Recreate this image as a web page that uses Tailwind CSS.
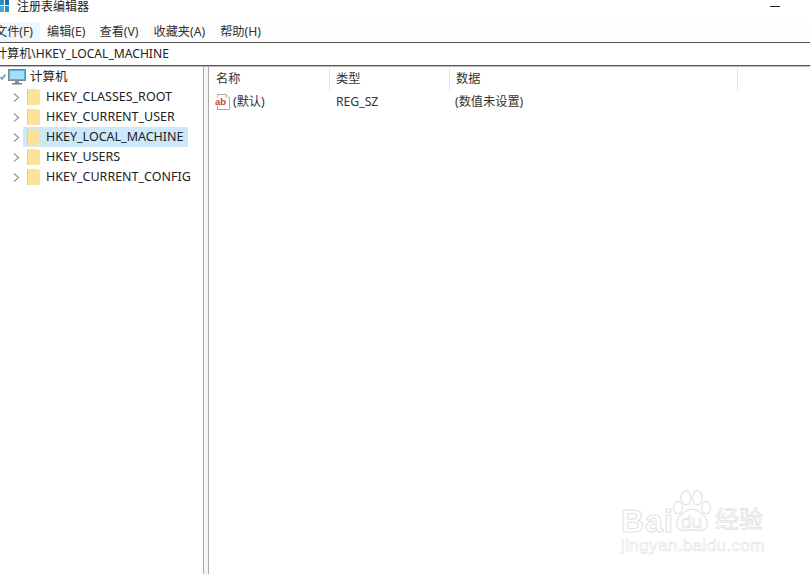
<!DOCTYPE html>
<html><head><meta charset="utf-8"><script src="https://cdn.jsdelivr.net/npm/@tailwindcss/browser@4"></script></head>
<body class="m-0 bg-white">
<div class="w-[810px] h-[574px] overflow-hidden flex flex-col bg-white text-[#1a1a1a] text-[12.2px] font-['Noto_Sans','Noto_Sans_CJK_SC',sans-serif] relative">
  <div class="h-[22px] shrink-0 flex items-start relative">
    <svg class="w-[10px] h-[13px] shrink-0" viewBox="0 0 10 13"><rect x="0" y="0" width="4" height="5" fill="#2a8ec4"/><rect x="5" y="0" width="4" height="5" fill="#1b6ea8"/><rect x="0" y="6" width="4" height="6" fill="#4aa8d8"/><rect x="5" y="6" width="4" height="6" fill="#2a8ec4"/></svg>
    <span class="ml-[7px] leading-[13px] text-[12px]">注册表编辑器</span>
    <div class="absolute left-[770px] top-[6px] w-[10px] h-px bg-[#222]"></div>
  </div>
  <div class="h-[20px] shrink-0 flex items-center leading-[20px] text-[#333] bg-[#fdfdfd]">
    <div class="w-[40px] h-[20px] bg-[#f0f6fb] overflow-hidden shrink-0 relative"><span class="absolute left-[-5px] whitespace-nowrap">文件(F)</span></div>
    <span class="ml-[7px]">编辑(E)</span>
    <span class="ml-[14px]">查看(V)</span>
    <span class="ml-[15px]">收藏夹(A)</span>
    <span class="ml-[15px]">帮助(H)</span>
  </div>
  <div class="h-[24px] shrink-0 border-y border-y-[#555] flex items-center overflow-hidden relative">
    <span class="absolute left-[-5px] whitespace-nowrap text-[#222] text-[12.1px]">计算机\HKEY_LOCAL_MACHINE</span>
  </div>
  <div class="flex-1 flex min-h-0 border-t border-t-[#bbb]">
    <div class="w-[204px] shrink-0 border-r border-r-[#aaa] text-[#222] text-[12.5px]">
      <div class="h-[20px] flex items-center relative">
        <svg class="absolute left-0 top-[7px] w-[6px] h-[6px]" viewBox="0 0 6 6"><path d="M0.5 3 L2 5 L5.5 0.5" fill="none" stroke="#3f9fc6" stroke-width="1.4"/></svg>
        <svg class="absolute left-[8px] top-[2px] w-[18px] h-[16px]" viewBox="0 0 18 16"><rect x="0.5" y="0.5" width="17" height="11" fill="#4eb2e8" stroke="#7a8a96"/><rect x="2" y="2" width="14" height="8" fill="#a9ddf7"/><rect x="7" y="12" width="4" height="2" fill="#8a98a4"/><rect x="4" y="14" width="10" height="1.5" fill="#6e7d88"/></svg>
        <span class="ml-[30px]">计算机</span>
      </div>
      <div class="h-[20px] flex items-center">
        <svg class="ml-[13px] w-[7px] h-[9px] shrink-0" viewBox="0 0 7 9"><path d="M1 0.5 L5.5 4.5 L1 8.5" fill="none" stroke="#9a9a9a" stroke-width="1.3"/></svg>
        <div class="ml-[3px] h-[20px] flex items-center gap-[6px] pl-[4px] pr-[4px]">
          <svg class="w-[13px] h-[16px] shrink-0" viewBox="0 0 13 16"><path d="M0 0 H9 L13 1 V16 H0 Z" fill="#fde39a"/><path d="M0 0 V16" stroke="#e8c667" stroke-width="1.5"/></svg>
          <span>HKEY_CLASSES_ROOT</span>
        </div>
      </div>
      <div class="h-[20px] flex items-center">
        <svg class="ml-[13px] w-[7px] h-[9px] shrink-0" viewBox="0 0 7 9"><path d="M1 0.5 L5.5 4.5 L1 8.5" fill="none" stroke="#9a9a9a" stroke-width="1.3"/></svg>
        <div class="ml-[3px] h-[20px] flex items-center gap-[6px] pl-[4px] pr-[4px]">
          <svg class="w-[13px] h-[16px] shrink-0" viewBox="0 0 13 16"><path d="M0 0 H9 L13 1 V16 H0 Z" fill="#fde39a"/><path d="M0 0 V16" stroke="#e8c667" stroke-width="1.5"/></svg>
          <span>HKEY_CURRENT_USER</span>
        </div>
      </div>
      <div class="h-[20px] flex items-center">
        <svg class="ml-[13px] w-[7px] h-[9px] shrink-0" viewBox="0 0 7 9"><path d="M1 0.5 L5.5 4.5 L1 8.5" fill="none" stroke="#9a9a9a" stroke-width="1.3"/></svg>
        <div class="ml-[3px] h-[20px] flex items-center gap-[6px] pl-[4px] pr-[4px] bg-[#cde8f8]">
          <svg class="w-[13px] h-[16px] shrink-0" viewBox="0 0 13 16"><path d="M0 0 H9 L13 1 V16 H0 Z" fill="#fde39a"/><path d="M0 0 V16" stroke="#e8c667" stroke-width="1.5"/></svg>
          <span>HKEY_LOCAL_MACHINE</span>
        </div>
      </div>
      <div class="h-[20px] flex items-center">
        <svg class="ml-[13px] w-[7px] h-[9px] shrink-0" viewBox="0 0 7 9"><path d="M1 0.5 L5.5 4.5 L1 8.5" fill="none" stroke="#9a9a9a" stroke-width="1.3"/></svg>
        <div class="ml-[3px] h-[20px] flex items-center gap-[6px] pl-[4px] pr-[4px]">
          <svg class="w-[13px] h-[16px] shrink-0" viewBox="0 0 13 16"><path d="M0 0 H9 L13 1 V16 H0 Z" fill="#fde39a"/><path d="M0 0 V16" stroke="#e8c667" stroke-width="1.5"/></svg>
          <span>HKEY_USERS</span>
        </div>
      </div>
      <div class="h-[20px] flex items-center">
        <svg class="ml-[13px] w-[7px] h-[9px] shrink-0" viewBox="0 0 7 9"><path d="M1 0.5 L5.5 4.5 L1 8.5" fill="none" stroke="#9a9a9a" stroke-width="1.3"/></svg>
        <div class="ml-[3px] h-[20px] flex items-center gap-[6px] pl-[4px] pr-[4px]">
          <svg class="w-[13px] h-[16px] shrink-0" viewBox="0 0 13 16"><path d="M0 0 H9 L13 1 V16 H0 Z" fill="#fde39a"/><path d="M0 0 V16" stroke="#e8c667" stroke-width="1.5"/></svg>
          <span>HKEY_CURRENT_CONFIG</span>
        </div>
      </div>
    </div>
    <div class="w-[4px] shrink-0 bg-[#f4f4f4]"></div>
    <div class="flex-1 min-w-0 border-l border-l-[#aaa] text-[#333]">
      <div class="h-[24px] flex items-center">
        <div class="w-[121px] h-full pl-[7px] flex items-center border-r border-r-[#e5e5e5]">名称</div>
        <div class="w-[120px] h-full pl-[6px] flex items-center border-r border-r-[#e5e5e5]">类型</div>
        <div class="w-[288px] h-full pl-[6px] flex items-center border-r border-r-[#e5e5e5]">数据</div>
      </div>
      <div class="h-[20px] mt-px flex items-center">
        <div class="w-[120px] pl-[6px] flex items-center gap-[2px]">
          <svg class="w-[16px] h-[16px] shrink-0" viewBox="0 0 16 16"><path d="M2.5 0.5 H11 L14.5 4 V15.5 H2.5 Z" fill="#fff" stroke="#a8a8a8"/><path d="M11 0.5 V4 H14.5" fill="#eee" stroke="#a8a8a8"/><rect x="0" y="3.5" width="14" height="8" fill="#fff"/><text x="0" y="10.5" font-size="9.5" font-weight="700" fill="#c8412f" font-family="Liberation Sans">ab</text></svg>
          <span>(默认)</span>
        </div>
        <div class="w-[120px] pl-[7px]">REG_SZ</div>
        <div class="pl-[6px]">(数值未设置)</div>
      </div>
    </div>
  </div>
  <div class="absolute left-[621px] top-[486px] w-[150px] h-[70px] text-white font-['Liberation_Sans',sans-serif] select-none">
    <span class="absolute left-0 top-[19px] text-[32px] leading-[32px] font-bold tracking-[1px] [-webkit-text-stroke:1px_#e2e2e2]">Bai</span>
    <svg class="absolute left-[49px] top-[2px] w-[44px] h-[48px]" viewBox="0 0 50 50" fill="#fff" stroke="#e2e2e2" stroke-width="1.4"><ellipse cx="9" cy="20" rx="5" ry="7"/><ellipse cx="18" cy="9" rx="5.5" ry="8"/><ellipse cx="31" cy="9" rx="5.5" ry="8"/><ellipse cx="41" cy="20" rx="5" ry="7"/><path d="M25 22 C33 22 45 32 42 41 C39 48 31 46 25 45 C19 46 11 48 8 41 C5 32 17 22 25 22 Z"/></svg>
    <span class="absolute left-[60px] top-[26px] text-[19px] leading-[19px] [-webkit-text-stroke:0.7px_#e2e2e2]">du</span>
    <span class="absolute left-[94px] top-[19px] text-[24px] leading-[26px] font-['Noto_Sans_CJK_SC',sans-serif] [-webkit-text-stroke:0.8px_#e2e2e2] whitespace-nowrap">经验</span>
    <span class="absolute left-0 top-[50px] text-[17px] leading-[20px] tracking-[0.4px] [-webkit-text-stroke:0.6px_#e4e4e4] whitespace-nowrap">jingyan.baidu.com</span>
  </div>
</div>
</body></html>
